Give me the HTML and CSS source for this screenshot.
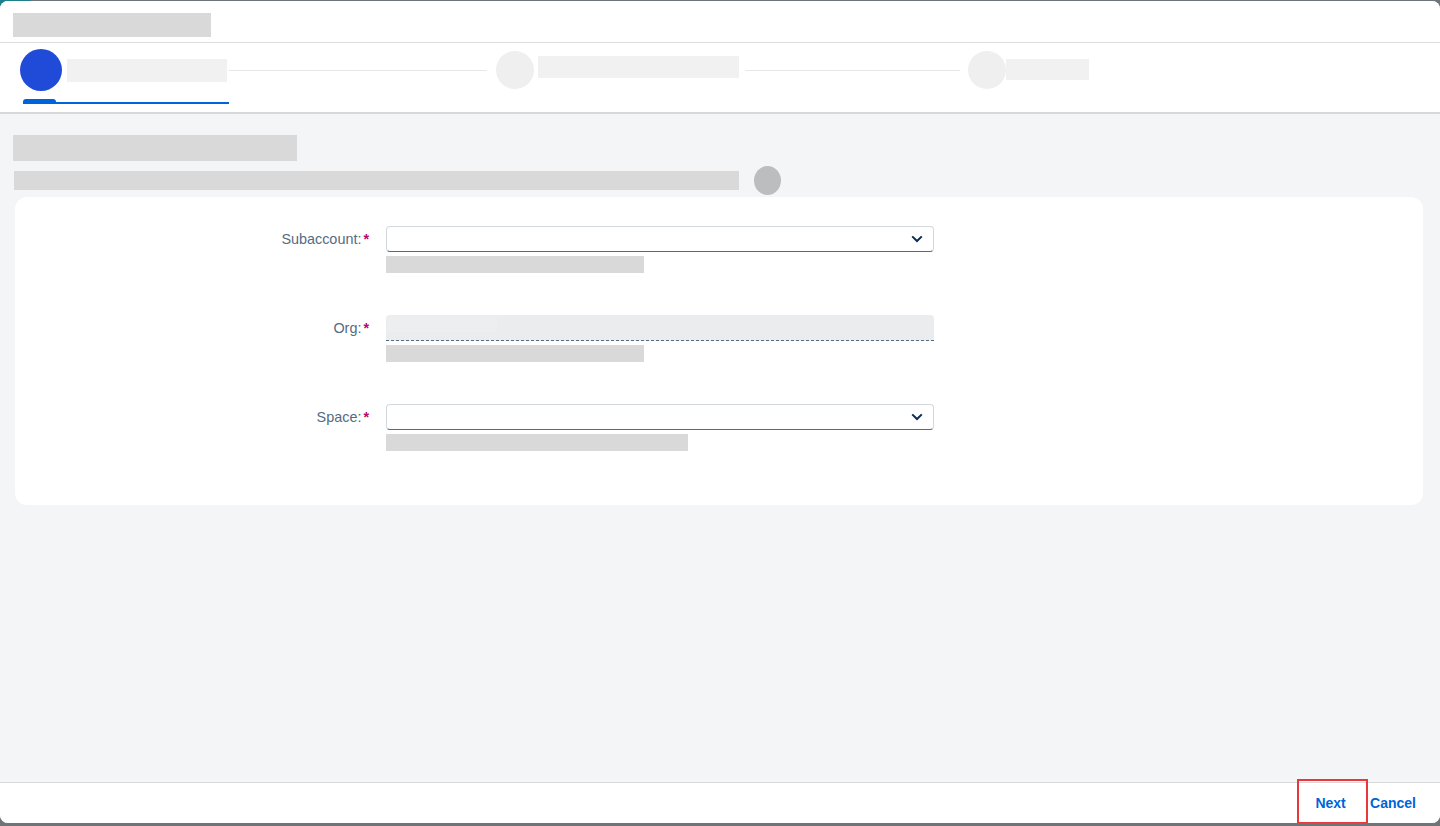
FILE: index.html
```html
<!DOCTYPE html>
<html lang="en">
  <head>
    <meta charset="UTF-8" />
    <meta name="viewport" content="width=device-width, initial-scale=1.0" />
    <title>Create Space</title>
    <link rel="stylesheet" href="styles.css">
  </head>
  <body>
    <div class="dialog">
      <header class="dialog-header">
        <div class="ph ph-title"></div>
      </header>

      <nav class="wizard">
        <div class="steps">
          <div class="step-dot active"></div>
          <div class="ph step-text s1"></div>
          <div class="step-line l1"></div>
          <div class="step-dot"></div>
          <div class="ph step-text s2"></div>
          <div class="step-line l2"></div>
          <div class="step-dot"></div>
          <div class="ph step-text s3"></div>
        </div>
        <div class="step-progress"><span></span></div>
      </nav>

      <main class="content">
        <div class="ph page-title"></div>
        <div class="subtitle-row">
          <div class="ph page-subtitle"></div>
          <div class="info-dot"></div>
        </div>

        <section class="card">
          <div class="form-row">
            <label>Subaccount:<span class="req">*</span></label>
            <div class="field">
              <div class="select">
                <svg width="12" height="8" viewBox="0 0 12 8"><path d="M1.2 1.4L6 6l4.8-4.6" fill="none" stroke="#0a2c4e" stroke-width="2"/></svg>
              </div>
              <div class="ph hint"></div>
            </div>
          </div>

          <div class="form-row">
            <label>Org:<span class="req">*</span></label>
            <div class="field">
              <div class="select readonly"><span class="value-ph"></span></div>
              <div class="ph hint"></div>
            </div>
          </div>

          <div class="form-row">
            <label>Space:<span class="req">*</span></label>
            <div class="field">
              <div class="select">
                <svg width="12" height="8" viewBox="0 0 12 8"><path d="M1.2 1.4L6 6l4.8-4.6" fill="none" stroke="#0a2c4e" stroke-width="2"/></svg>
              </div>
              <div class="ph hint wide"></div>
            </div>
          </div>
        </section>
      </main>

      <footer class="dialog-footer">
        <button class="btn highlight">Next</button>
        <button class="btn">Cancel</button>
      </footer>
    </div>
  </body>
</html>
```

FILE: styles.css
```css
:root {
  --ph-dark: #d9d9d9;
  --ph-light: #f1f1f1;
  --label-clr: #556b82;
  --link-clr: #0064d9;
}

body {
  margin: 0;
  height: 826px;
  overflow: hidden;
  background: radial-gradient(circle at 0 0, #1d7f8c 0 30px, transparent 31px), #6f7479;
  font-family: "Liberation Sans", Arial, sans-serif;
}

.dialog {
  margin-top: 1px;
  height: 822px;
  background: #f4f5f7;
  border-radius: 8px;
  overflow: hidden;
  display: flex;
  flex-direction: column;
}

.ph {
  background-color: var(--ph-dark);
}

.dialog-header {
  height: 41px;
  flex: none;
  background: #fff;
  border-bottom: 1px solid #dcdcdc;
  padding: 12px 0 0 13px;
  box-sizing: content-box;
  height: 29px;
  .ph-title {
    width: 198px;
    height: 24px;
  }
}

/* wizard step bar */
.wizard {
  flex: none;
  background: #fff;
  border-bottom: 2px solid #d5d9dc;
  box-sizing: border-box;
  height: 71px;
  padding-top: 6px;
}

.steps {
  display: flex;
  align-items: center;
  height: 42px;
  padding-left: 20px;
  .step-dot {
    width: 38px;
    height: 38px;
    border-radius: 50%;
    background: #efefef;
    flex: none;
  }
  .step-dot.active {
    width: 42px;
    height: 42px;
    background: #1f4bd8;
  }
  .step-text {
    background: var(--ph-light);
  }
  .s1 { width: 160px; height: 23px; margin-left: 5px; }
  .s2 { width: 201px; height: 22px; margin-left: 4px; margin-top: -6px; }
  .s3 { width: 83px; height: 21px; margin-top: -2px; }
  .step-line {
    height: 1px;
    background: #e8e8e8;
  }
  .l1 { width: 258px; margin: 0 9px 0 2px; }
  .l2 { width: 215px; margin: 0 8px 0 6px; }
}

.step-progress {
  margin: 8px 0 0 23px;
  width: 206px;
  height: 5px;
  display: flex;
  align-items: flex-end;
  background: linear-gradient(var(--link-clr), var(--link-clr)) bottom / 100% 2px no-repeat;
  span {
    width: 33px;
    height: 5px;
    border-radius: 3px 3px 0 0;
    background: var(--link-clr);
  }
}

.content {
  flex: 1;
  padding: 21px 17px 0 13px;
  .page-title {
    width: 284px;
    height: 26px;
  }
}

.subtitle-row {
  display: flex;
  align-items: center;
  margin-top: 5px;
  padding-left: 1px;
  .page-subtitle {
    width: 725px;
    height: 19px;
  }
  .info-dot {
    width: 27px;
    height: 29px;
    border-radius: 50%;
    background: #bcbdbf;
    margin-left: 15px;
  }
}

.card {
  margin: 2px 0 0 2px;
  height: 308px;
  box-sizing: border-box;
  background: #fff;
  border-radius: 12px;
  padding-top: 29px;
  display: flex;
  flex-direction: column;
  gap: 42px;
}

.form-row {
  display: grid;
  grid-template-columns: 357px 548px;
  column-gap: 14px;
  label {
    height: 26px;
    display: flex;
    align-items: center;
    justify-content: flex-end;
    padding-right: 3px;
    font-size: 14.4px;
    color: var(--label-clr);
  }
  .req {
    color: #b8076b;
    font-weight: bold;
    margin-left: 2px;
  }
}

.select {
  height: 26px;
  box-sizing: border-box;
  border: 1px solid #d3d8dd;
  border-bottom-color: #556b82;
  border-radius: 4px;
  display: flex;
  align-items: center;
  justify-content: flex-end;
  padding-right: 10px;
}

.select.readonly {
  background: #eaecee;
  border: none;
  border-bottom: 1px dashed #556b82;
  border-radius: 4px 4px 0 0;
  justify-content: flex-start;
  padding: 1px 0 0 1px;
  align-items: flex-start;
  .value-ph {
    width: 110px;
    height: 16px;
    background: #edeef0;
  }
}

.hint {
  margin-top: 4px;
  width: 258px;
  height: 17px;
}
.hint.wide {
  width: 302px;
}

.dialog-footer {
  height: 40px;
  flex: none;
  background: #fff;
  border-top: 1px solid #d9d9d9;
  display: flex;
  justify-content: flex-end;
  align-items: stretch;
  padding-right: 22px;
}

.btn {
  border: none;
  background: none;
  font-family: inherit;
  font-size: 14px;
  font-weight: bold;
  color: var(--link-clr);
  padding: 0 2px;
  margin-left: 2px;
}

.btn.highlight {
  position: relative;
  width: 67px;
  padding: 0 4px 0 0;
}

.btn.highlight::after {
  content: "";
  position: absolute;
  inset: -4px -2px -1px -2px;
  border: 2px solid #e8383b;
}
```
